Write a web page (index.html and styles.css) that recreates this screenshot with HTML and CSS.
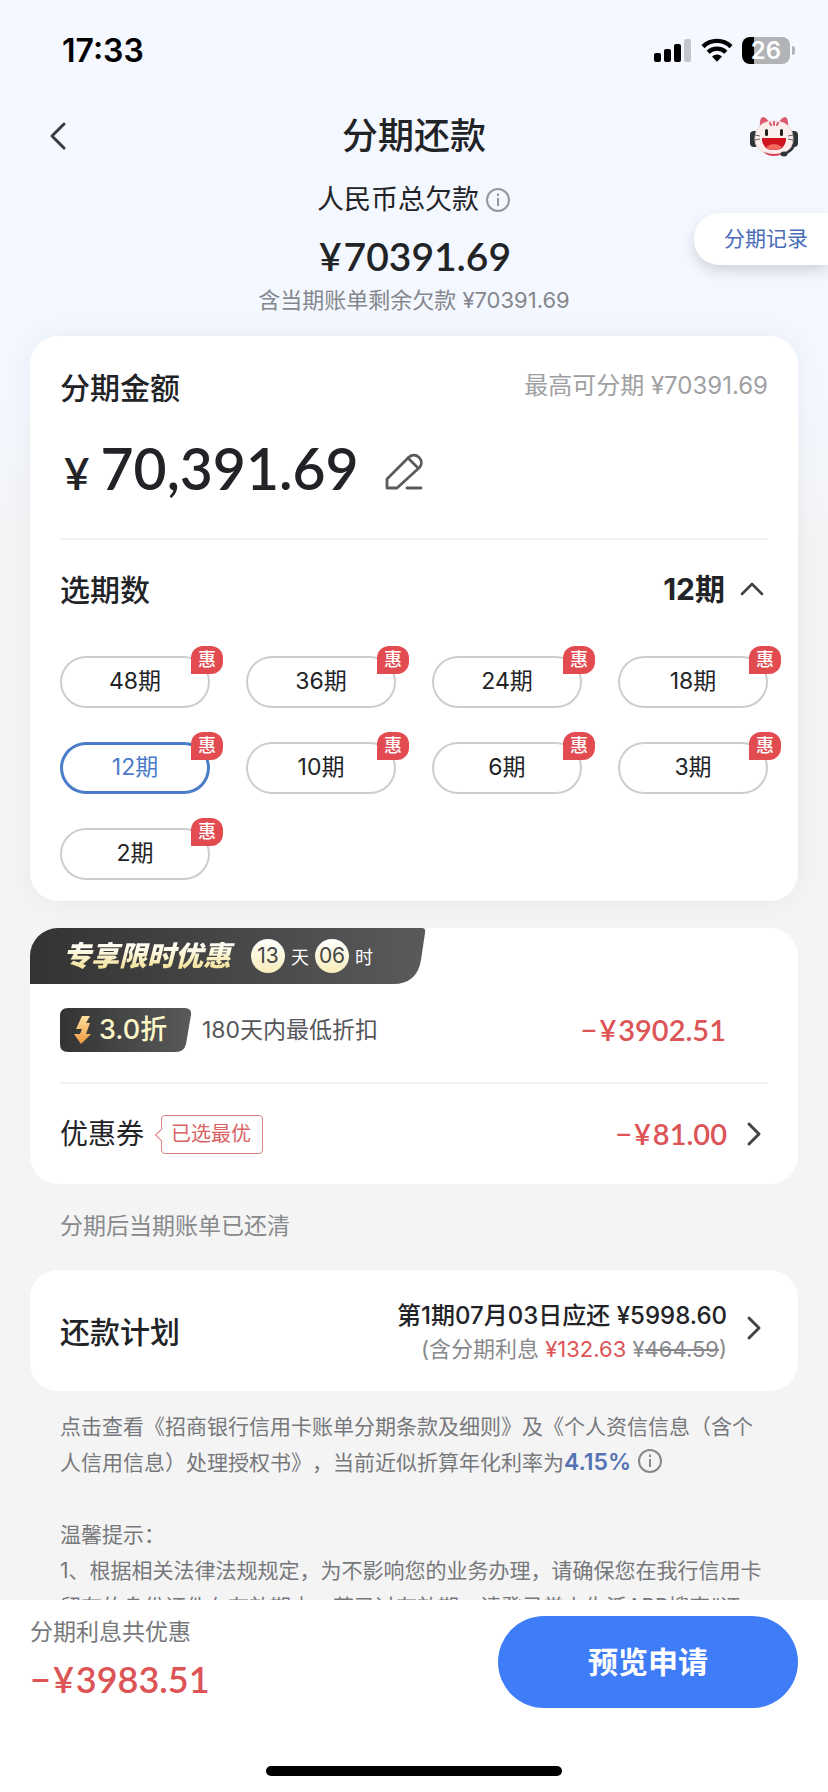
FILE: index.html
```html
<!DOCTYPE html>
<html lang="zh-CN">
<head>
<meta charset="utf-8">
<meta name="viewport" content="width=device-width, initial-scale=1">
<title>分期还款</title>
<link rel="stylesheet" href="styles.css">
</head>
<body>
<div class="app">
  <div class="status">
    <time class="status-time">17:33</time>
    <div class="status-icons">
      <svg width="38" height="26" viewBox="0 0 38 26" aria-hidden="true">
        <rect x="0" y="16" width="7" height="9" rx="2"/>
        <rect x="10" y="12" width="7" height="13" rx="2"/>
        <rect x="20" y="7" width="7" height="18" rx="2"/>
        <rect x="30" y="2" width="7" height="23" rx="2" fill="#c3c6cc"/>
      </svg>
      <svg width="32" height="24" viewBox="0 0 32 24" aria-hidden="true">
        <g fill="none" stroke="#000" stroke-width="4.4">
          <path d="M2 8.6a20 20 0 0 1 28 0"/>
          <path d="M7.200 14.200a12.600 12.600 0 0 1 17.600 0"/>
        </g>
        <path d="M11 18.400a7.200 7.200 0 0 1 10 0l-5 5.400z"/>
      </svg>
      <div class="battery">26</div>
    </div>
  </div>

  <header class="nav">
    <button class="icon-button" type="button" aria-label="返回">
      <svg width="20" height="30" viewBox="0 0 20 30" fill="none" stroke="#3a3b40" stroke-width="3" stroke-linecap="round" stroke-linejoin="round"><path d="M16 3 4 15l12 12"/></svg>
    </button>
    <h1 class="nav-title">分期还款</h1>
    <button class="icon-button" type="button" aria-label="客服">
      <svg width="50" height="44" viewBox="0 0 50 44">
        <rect x="2" y="17" width="9" height="16" rx="4" fill="#2e3535"/>
        <rect x="41" y="17" width="9" height="16" rx="4" fill="#2e3535"/>
        <path d="M12 14q-1-10 3-11 3 0 7 6zM40 14q1-10-3-11-3 0-7 6z" fill="#dc5a70"/>
        <path d="M26 7c12 0 19 7 19 18 0 10-8 16-19 16S7 35 7 25C7 14 14 7 26 7z" fill="#fbeeec" stroke="#ecd5d3" stroke-width="1"/>
        <path d="M16 38q10 4 20 0-3 4-10 4t-10-4z" fill="#d9405a"/>
        <path d="M26 8v3M22 9l1 2M30 9l-1 2" stroke="#dc5a70" stroke-width="2" stroke-linecap="round"/>
        <path d="M46 31q-2 6-10 9" fill="none" stroke="#2e3535" stroke-width="2.500"/>
        <ellipse cx="36" cy="40" rx="3.500" ry="2.500" fill="#2e3535"/>
        <rect x="17" y="15" width="3" height="7" rx="1.500" fill="#222"/>
        <rect x="32" y="15" width="3" height="7" rx="1.500" fill="#222"/>
        <path d="M14 24h24v2q-1 10-12 10T14 26z" fill="#cf1420"/>
        <path d="M18 33q8-6 16 0-3 3-8 3t-8-3z" fill="#f0685f"/>
        <path d="M7 21l5 1M7 26l5-1M45 21l-5 1M45 26l-5-1" stroke="#666" stroke-width="1"/>
      </svg>
    </button>
  </header>

  <main class="content">
    <section class="summary">
      <p class="summary-label">人民币总欠款
        <svg class="info" viewBox="0 0 26 26" fill="none" stroke="#94979f" stroke-width="2"><circle cx="13" cy="13" r="11"/><path d="M13 11v8"/><path d="M13 6.500v2.500"/></svg>
      </p>
      <p class="summary-amount"><span class="yen">¥</span>70391.69</p>
      <p class="summary-note">含当期账单剩余欠款 ¥70391.69</p>
    </section>

    <section class="card plan">
      <div class="row">
        <h2 class="heading">分期金额</h2>
        <span class="limit">最高可分期 ¥70391.69</span>
      </div>
      <div class="amount">
        <span class="amount-sign">¥</span>
        <span class="amount-value">70,391.69</span>
        <button class="icon-button edit" type="button" aria-label="修改金额">
          <svg width="38" height="38" viewBox="0 0 38 38" fill="none" stroke="#5b5b5e" stroke-width="2.800" stroke-linejoin="round" stroke-linecap="round"><path d="M2 36v-9L24 5a7.500 7.500 0 0 1 11 10L12 36z"/><path d="M23 6l9 9"/><path d="M22 36h14"/></svg>
        </button>
      </div>
      <div class="row terms-head">
        <h2 class="heading">选期数</h2>
        <button class="toggle" type="button">12期
          <svg width="24" height="14" viewBox="0 0 24 14" fill="none" stroke="#444" stroke-width="2.600" stroke-linecap="round" stroke-linejoin="round"><path d="M2 12 12 2l10 10"/></svg>
        </button>
      </div>
      <div class="terms">
        <button class="term" type="button">48期<span class="badge">惠</span></button>
        <button class="term" type="button">36期<span class="badge">惠</span></button>
        <button class="term" type="button">24期<span class="badge">惠</span></button>
        <button class="term" type="button">18期<span class="badge">惠</span></button>
        <button class="term selected" type="button" aria-pressed="true">12期<span class="badge">惠</span></button>
        <button class="term" type="button">10期<span class="badge">惠</span></button>
        <button class="term" type="button">6期<span class="badge">惠</span></button>
        <button class="term" type="button">3期<span class="badge">惠</span></button>
        <button class="term" type="button">2期<span class="badge">惠</span></button>
      </div>
    </section>

    <section class="card offers">
      <div class="banner">
        <svg class="backdrop" viewBox="0 0 396 56" preserveAspectRatio="none" aria-hidden="true">
          <defs><linearGradient id="dark" x1="0" x2="1"><stop offset="0" stop-color="#333"/><stop offset="1" stop-color="#5a5a5a"/></linearGradient></defs>
          <path d="M0 0h392q4 0 3 5l-4 27q-4 24-28 24H0z" fill="url(#dark)"/>
        </svg>
        <strong class="banner-title">专享限时优惠</strong>
        <span class="count">13</span><span class="unit">天</span><span class="count">06</span><span class="unit">时</span>
      </div>
      <div class="offer">
        <span class="rate">
          <svg class="backdrop" viewBox="0 0 132 44" preserveAspectRatio="none" aria-hidden="true">
            <path d="M8 0h116q8 0 7 7l-5 29q-2 8-10 8H8q-8 0-8-8V8q0-8 8-8z" fill="url(#dark)"/>
          </svg>
          <svg width="18" height="28" viewBox="0 0 18 28" aria-hidden="true"><defs><linearGradient id="gold" x2="0" y2="1"><stop offset="0" stop-color="#fbe0a0"/><stop offset="1" stop-color="#f09a3e"/></linearGradient></defs><path d="M8 0h8l-4 7h4l-4 11h5L7 28 0 18h6l2-5H2z" fill="url(#gold)"/></svg>
          3.0折
        </span>
        <span class="offer-text">180天内最低折扣</span>
        <span class="money">−<span class="yen">¥</span>3902.51</span>
      </div>
      <a class="offer coupon" href="#coupon">
        <span class="coupon-name">优惠券</span>
        <span class="bubble">已选最优</span>
        <span class="money">−<span class="yen">¥</span>81.00</span>
        <svg class="arrow" viewBox="0 0 16 26"><path d="M3 3l10 10L3 23"/></svg>
      </a>
    </section>

    <p class="cleared">分期后当期账单已还清</p>

    <a class="card repay" href="#schedule">
      <h2 class="heading">还款计划</h2>
      <span class="repay-detail">
        <strong class="repay-due">第1期07月03日应还 ¥5998.60</strong>
        <span class="repay-interest">(含分期利息 <em class="now">¥132.63</em> ¥<del>464.59</del>)</span>
      </span>
      <svg class="arrow" viewBox="0 0 16 26"><path d="M3 3l10 10L3 23"/></svg>
    </a>

    <section class="legal">
      <p>点击查看《招商银行信用卡账单分期条款及细则》及《个人资信信息（含个人信用信息）处理授权书》，当前近似折算年化利率为<b class="apr">4.15%</b> <svg class="info" viewBox="0 0 26 26" fill="none" stroke="#888" stroke-width="2"><circle cx="13" cy="13" r="11"/><path d="M13 11v8"/><path d="M13 6.500v2.500"/></svg></p>
      <p class="tips">温馨提示：<br>1、根据相关法律法规规定，为不影响您的业务办理，请确保您在我行信用卡留存的身份证件在有效期内，若已过有效期，请登录掌上生活APP搜索“证</p>
    </section>
  </main>

  <a class="records" href="#records">分期记录</a>

  <footer class="footer">
    <div class="footer-main">
      <div>
        <p class="saved-label">分期利息共优惠</p>
        <p class="saved-amount">−<span class="yen">¥</span>3983.51</p>
      </div>
      <button class="submit" type="button">预览申请</button>
    </div>
    <div class="home"></div>
  </footer>
</div>
</body>
</html>
```
FILE: styles.css
```css
* { box-sizing: border-box; }

body, h1, h2, p { margin: 0; }

body {
  font-family: Inter, "Noto Sans CJK SC", sans-serif;
  color: #222326;
  background: #f4f4f4;
}

button {
  font: inherit;
  color: inherit;
  padding: 0;
  border: 0;
  background: none;
}

a { color: inherit; text-decoration: none; }

.app {
  position: relative;
  display: flex;
  flex-direction: column;
  height: 100vh;
  background: linear-gradient(#f5f8ff 0, #f3f7ff 400px, #f4f4f4 560px);
}

/* Status bar */
.status {
  display: flex;
  flex: none;
  align-items: center;
  justify-content: space-between;
  height: 100px;
  padding: 0 34px 0 62px;
}

.status-time { font-size: 32px; font-weight: 600; color: #000; }

.status-icons { display: flex; align-items: center; gap: 9px; }

.battery {
  position: relative;
  width: 48px;
  height: 27px;
  margin-right: 4px;
  border-radius: 8px;
  background: linear-gradient(90deg, #000 12px, #b2b3b6 12px);
  color: #fff;
  font-size: 24px;
  font-weight: 600;
  line-height: 27px;
  text-align: center;
}

.battery::after {
  content: "";
  position: absolute;
  top: 9px;
  right: -5px;
  width: 3px;
  height: 9px;
  border-radius: 0 3px 3px 0;
  background: #b2b3b6;
}

/* Navigation */
.nav {
  position: relative;
  display: flex;
  flex: none;
  align-items: center;
  justify-content: space-between;
  height: 72px;
  padding: 0 30px 0 48px;
}

.nav-title {
  position: absolute;
  inset: 0;
  text-align: center;
  font-size: 36px;
  font-weight: 500;
  line-height: 72px;
  pointer-events: none;
}

.icon-button { display: flex; }

.content { flex: 1; min-height: 0; overflow: hidden; padding: 0 30px; }

/* Total owed */
.summary { padding: 10px 0 20px; text-align: center; }

.summary-label {
  display: flex;
  align-items: center;
  justify-content: center;
  gap: 6px;
  font-size: 27px;
  line-height: 36px;
}

.info { width: 26px; height: 26px; vertical-align: -4px; }

.summary-amount {
  margin-top: 12px;
  font-family: Lato, sans-serif;
  font-size: 39px;
  font-weight: 600;
  line-height: 52px;
}

.summary-note { margin-top: 2px; font-size: 22px; line-height: 32px; color: #85878d; }

.records {
  position: absolute;
  top: 213px;
  right: 0;
  padding: 0 20px 0 30px;
  border-radius: 25px 0 0 25px;
  background: #fff;
  box-shadow: 0 6px 14px rgba(0, 0, 0, 0.14);
  color: #4a6cb8;
  font-size: 21px;
  line-height: 52px;
}

/* Cards */
.card { border-radius: 28px; background: #fff; }

.heading { font-size: 30px; font-weight: 500; line-height: 40px; }

.row {
  display: flex;
  align-items: flex-start;
  justify-content: space-between;
  height: 40px;
}

.plan { padding: 32px 30px 21px; box-shadow: 0 0 28px rgba(0, 0, 0, 0.05); }

.limit { font-size: 24px; line-height: 36px; color: #a0a0a3; }

.amount {
  display: flex;
  align-items: baseline;
  height: 132px;
  padding-top: 24px;
  border-bottom: 2px solid #f3f3f3;
  font-family: Lato, sans-serif;
  font-weight: 600;
  line-height: 72px;
}

.amount-sign { margin: 0 11px 0 4px; font-size: 44px; }

.amount-value { font-size: 57px; }

.edit { margin-left: 26px; }

.terms-head { margin-top: 30px; }

.toggle {
  display: flex;
  align-items: center;
  gap: 15px;
  padding-right: 4px;
  font-size: 30px;
  font-weight: 700;
  line-height: 38px;
}

.terms {
  display: grid;
  grid-template-columns: repeat(4, 1fr);
  gap: 34px 36px;
  margin-top: 46px;
}

.term {
  position: relative;
  height: 52px;
  padding-bottom: 2px;
  border-radius: 26px;
  box-shadow: inset 0 0 0 2px #cdcdcf;
  font-size: 23px;
  line-height: 50px;
}

.term.selected { box-shadow: inset 0 0 0 3px #4a7cc9; color: #4a7cc9; }

.badge {
  position: absolute;
  top: -10px;
  right: -13px;
  width: 32px;
  border-radius: 12px 12px 12px 0;
  background: #e24c50;
  color: #fff;
  font-size: 18px;
  font-weight: 500;
  line-height: 28px;
}

/* Offers */
.offers { margin-top: 27px; overflow: hidden; }

.banner {
  position: relative;
  display: flex;
  align-items: center;
  width: 396px;
  height: 56px;
  padding-left: 33px;
}

.backdrop { position: absolute; inset: 0; width: 100%; height: 100%; }

.banner-title {
  position: relative;
  margin-right: 16px;
  padding-right: 4px;
  background: linear-gradient(#fffdf0 30%, #f3e39a 80%);
  -webkit-background-clip: text;
  background-clip: text;
  color: transparent;
  font-size: 28px;
  font-style: italic;
  font-weight: 900;
  line-height: 40px;
}

.count {
  position: relative;
  width: 34px;
  height: 34px;
  border-radius: 50%;
  background: linear-gradient(#fff, #f8edba);
  color: #444;
  font-size: 21px;
  line-height: 34px;
  text-align: center;
}

.unit { position: relative; width: 30px; color: #fff; font-size: 18px; text-align: center; }

.offer {
  display: flex;
  align-items: center;
  margin: 0 30px;
  padding: 24px 42px 30px 0;
  border-bottom: 2px solid #f0f0f0;
}

.rate {
  position: relative;
  isolation: isolate;
  display: flex;
  align-items: center;
  gap: 7px;
  width: 132px;
  height: 44px;
  padding-left: 14px;
  color: #fdf7c8;
  font-size: 27px;
  font-weight: 500;
  line-height: 44px;
}

.rate .backdrop { z-index: -1; }

.offer-text { margin-left: 10px; font-size: 23px; line-height: 44px; color: #55565a; }

.money {
  margin-left: auto;
  color: #dc5456;
  font-family: Lato, sans-serif;
  font-size: 29px;
  font-weight: 600;
  line-height: 44px;
}

.yen { margin: 0 2px; }

.coupon { height: 100px; padding: 0 6px 0 0; border: 0; }

.coupon-name { font-size: 28px; line-height: 42px; }

.bubble {
  position: relative;
  margin-left: 17px;
  padding: 0 11px 0 9px;
  border: 1px solid #dd8284;
  border-radius: 4px;
  color: #d96264;
  font-size: 20px;
  line-height: 37px;
}

.bubble::before {
  content: "";
  position: absolute;
  top: 14px;
  left: -5px;
  width: 9px;
  height: 9px;
  border: solid #dd8284;
  border-width: 0 0 1px 1px;
  background: #fff;
  transform: rotate(45deg);
}

.arrow {
  flex: none;
  width: 16px;
  height: 26px;
  margin-left: 19px;
  fill: none;
  stroke: #444;
  stroke-width: 3;
  stroke-linecap: round;
  stroke-linejoin: round;
}

.cleared { padding: 25px 30px 27px; color: #88898c; font-size: 23px; line-height: 34px; }

/* Repayment schedule */
.repay {
  display: flex;
  align-items: center;
  justify-content: space-between;
  padding: 29px 36px 26px 30px;
}

.repay .arrow { margin-bottom: 8px; }

.repay-detail {
  display: flex;
  flex-direction: column;
  margin-left: auto;
  text-align: right;
}

.repay-due { font-size: 24px; font-weight: 500; line-height: 34px; }

.repay-interest { color: #88898c; font-size: 22px; line-height: 32px; }

.now { color: #dc5456; font-style: normal; }

.legal {
  padding: 18px 26px 0 30px;
  color: #77787b;
  font-size: 21px;
  line-height: 36px;
  text-spacing-trim: space-all;
}

.apr { color: #5573b3; font-size: 23px; font-weight: 600; line-height: 30px; }

.tips { margin-top: 36px; }

/* Footer */
.footer {
  position: relative;
  display: flex;
  flex: none;
  flex-direction: column;
  justify-content: space-between;
  align-items: center;
  height: 192px;
  padding: 16px 30px;
  background: #fff;
}

.footer-main { display: flex; justify-content: space-between; width: 100%; }

.saved-label { color: #77787b; font-size: 23px; line-height: 32px; }

.saved-amount {
  margin-top: 9px;
  color: #dc5456;
  font-family: Lato, sans-serif;
  font-size: 36px;
  font-weight: 600;
  line-height: 44px;
}

.submit {
  width: 300px;
  height: 92px;
  border-radius: 46px;
  background: #3f7cf8;
  color: #fff;
  font-size: 30px;
  font-weight: 700;
  line-height: 90px;
}

.home { width: 296px; height: 10px; border-radius: 5px; background: #000; }
```
